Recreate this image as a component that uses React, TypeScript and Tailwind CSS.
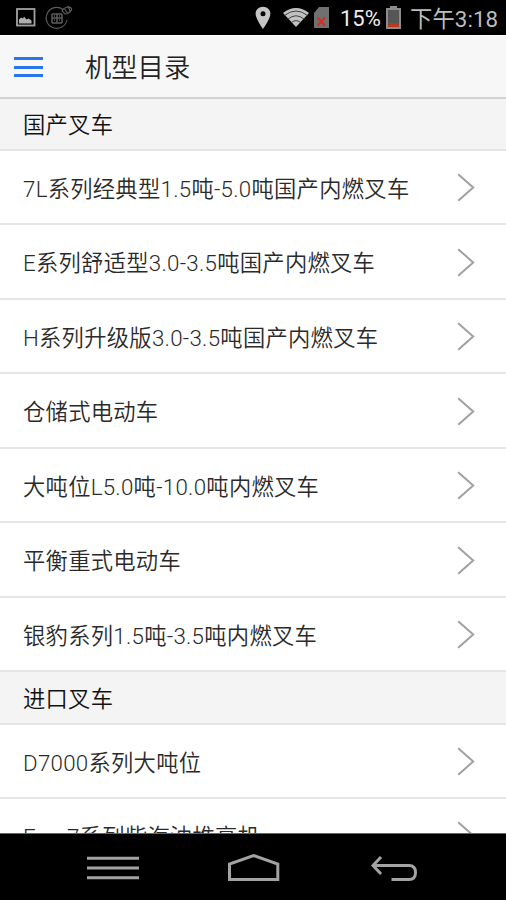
const domestic = [
  '7L系列经典型1.5吨-5.0吨国产内燃叉车',
  'E系列舒适型3.0-3.5吨国产内燃叉车',
  'H系列升级版3.0-3.5吨国产内燃叉车',
  '仓储式电动车',
  '大吨位L5.0吨-10.0吨内燃叉车',
  '平衡重式电动车',
  '银豹系列1.5吨-3.5吨内燃叉车',
];

const imported = ['D7000系列大吨位', 'Eco-7系列柴汽油堆高机'];

function StatusBar() {
  return (
    <header className="flex h-[35px] shrink-0 items-center bg-black text-[#bdbdbd]">
      <svg className="ml-4 shrink-0" width="20" height="19" viewBox="0 0 20 19">
        <rect x="1" y="1" width="17.5" height="16.5" fill="none" stroke="#a3a3a3" strokeWidth="1.8" />
        <path d="M3 15.5v-4l2-2 2 1 1-2 2.5 3 2-1 3 2v3z" fill="#b0b0b0" />
      </svg>
      <svg className="ml-[9px] shrink-0" width="28" height="25" viewBox="0 0 28 25" fill="none" stroke="#5c5c5c" strokeWidth="1.2">
        <path d="M18 4.5A10.5 10.5 0 1 0 22 15" />
        <path d="M7 9h10M7 9v9M17 9v9M7 13h10M7 18h10M12 9v9M9 11h1M14 11h1M9 15h1M14 15h1" strokeWidth="1.5" />
        <path d="M17 6c2-4 7-5 9-3s-2 6-6 6zM19 3l4 6M23 1l2 5" />
      </svg>
      <div className="flex-1" />
      <svg className="shrink-0" width="16" height="24" viewBox="0 0 16 24">
        <path fillRule="evenodd" d="M8 .8C3.800.8.6 3.800.6 7.800.6 13 8 23 8 23s7.400-10 7.400-15.200C15.400 3.800 12.200.8 8 .8zM8 5.200a2.500 2.500 0 1 1 0 5 2.500 2.500 0 0 1 0-5z" fill="#c6c6c6" />
      </svg>
      <svg className="ml-[11px] shrink-0" width="28" height="21" viewBox="0 0 28 21">
        <path d="M1 6Q14-4 27 6L14 20z" fill="#c2c2c2" />
        <path d="M2.500 8.500Q14-.5 25.500 8.500M6 12Q14 5.500 22 12M9.500 15.300Q14 12 18.500 15.300" fill="none" stroke="#404040" strokeWidth="1" />
      </svg>
      <svg className="ml-[4px] shrink-0" width="16" height="21" viewBox="0 0 16 21">
        <path d="M5 0H15V21H0V6z" fill="#707070" />
        <path d="M3.500 10.500l7.500 8M11 10.500l-7.500 8" stroke="#d92b24" strokeWidth="2" />
      </svg>
      <span className="ml-[10px] w-[41px] whitespace-nowrap pt-[3px] text-[22px] font-normal leading-none text-[#eeeeee]">15%</span>
      <svg className="ml-[5px] shrink-0" width="15" height="23" viewBox="0 0 15 23">
        <path d="M4 0h7v2H15V23H0V2H4z" fill="#8c8c8c" />
        <path d="M2 4h11v13H2z" fill="#565656" />
        <path d="M2 17h11v4H2z" fill="#b53a20" />
      </svg>
      <span className="ml-[9px] mr-[7px] w-[89px] whitespace-nowrap pt-[3px] text-[22.300px] font-normal leading-none tracking-[0.1px]">下午3:18</span>
    </header>
  );
}

function SectionTitle({ text }: { text: string }) {
  return (
    <h2 className="flex h-[52.300px] shrink-0 items-center border-b-2 border-[#e4e4e4] bg-[#f4f4f4] pl-[23px] pt-[5px] text-[22.300px] tracking-[0.25px] text-[#111]">
      {text}
    </h2>
  );
}

function Row({ text }: { text: string }) {
  return (
    <li className="flex h-[74.500px] shrink-0 items-center justify-between border-b-2 border-[#e5e5e5] pl-[23px] pr-[31px] pt-px text-[22.300px] tracking-[0.27px] text-[#2a2a2a]">
      <span className="whitespace-nowrap pt-1">{text}</span>
      <svg width="18" height="29" viewBox="0 0 18 29" fill="none" stroke="#a0a0a0" strokeWidth="2">
        <path d="M1.200 1.200L16.200 14.500L1.200 27.800" />
      </svg>
    </li>
  );
}

function NavBar() {
  return (
    <nav className="flex h-[67px] shrink-0 items-start border-t border-[#666] bg-black">
      <svg width="506" height="66" viewBox="0 0 506 66" fill="none" stroke="#a3a3a3" strokeWidth="3">
        <path d="M87 24.300H139M87 34.100H139M87 43.800H139" />
        <path d="M229.500 45.500V30L253.500 21.500L277.800 30V45.500z" />
        <path d="M381 23L373 31.500L381 40M373 31.500H409Q415.500 31.500 415.500 38.500Q415.500 45.500 409 45.500H391.500" />
      </svg>
    </nav>
  );
}

export default function App() {
  return (
    <div className="flex h-[900px] w-[506px] flex-col overflow-hidden bg-white font-[Roboto,'Noto_Sans_CJK_SC',sans-serif] font-[350]">
      <StatusBar />
      <div className="flex h-[63.500px] shrink-0 items-center border-b-2 border-t border-t-white border-b-[#d2d2d2] bg-[#f7f7f7] pl-[14px]">
        <button className="mt-[2px] flex w-[29px] flex-col gap-[5.500px]" aria-label="菜单">
          <span className="h-[3px] w-full bg-[#2a75ee]" />
          <span className="h-[3px] w-full bg-[#2a75ee]" />
          <span className="h-[3px] w-full bg-[#2a75ee]" />
        </button>
        <h1 className="ml-[42px] pt-1 text-[26.300px] text-[#222]">机型目录</h1>
      </div>
      <main className="flex min-h-0 flex-1 flex-col overflow-hidden">
        <SectionTitle text="国产叉车" />
        <ul className="shrink-0">
          {domestic.map((name) => (
            <Row key={name} text={name} />
          ))}
        </ul>
        <SectionTitle text="进口叉车" />
        <ul className="shrink-0">
          {imported.map((name) => (
            <Row key={name} text={name} />
          ))}
        </ul>
      </main>
      <NavBar />
    </div>
  );
}
